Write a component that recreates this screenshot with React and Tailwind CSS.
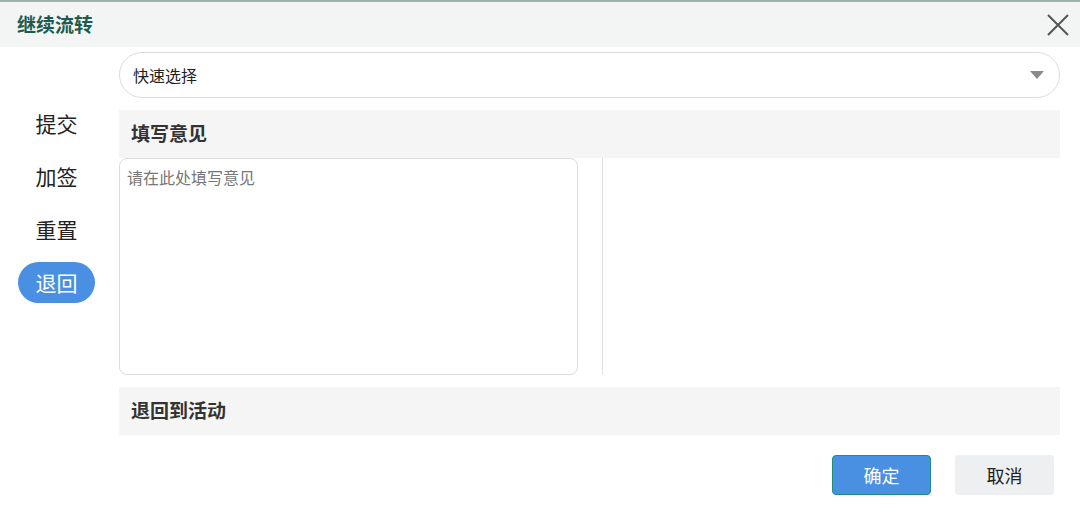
import React, { useState } from 'react';

const menu = ['提交', '加签', '重置', '退回'];

const serif = { fontFamily: '"Liberation Serif", "Noto Sans CJK SC", serif' };

const App = () => {
  const [active, setActive] = useState('退回');

  return (
    <div
      className="w-[1080px] h-[514px] bg-white border-t-2 border-[#9db3ab] overflow-hidden"
      style={{ fontFamily: '"Noto Sans CJK SC", "Noto Sans", sans-serif' }}
    >
      {/* Header */}
      <div className="h-[45px] bg-[#f3f5f5] flex items-center justify-between pl-[17px] pr-[8px]">
        <span className="text-[19px] font-bold text-[#1d5c4c] pt-[4px]" style={serif}>继续流转</span>
        <button className="w-[28px] h-[28px] flex items-center justify-center text-[#555]">
          <svg width="22" height="22" viewBox="0 0 22 22" fill="none" stroke="currentColor" strokeWidth="2">
            <path d="M1 1L21 21M21 1L1 21" />
          </svg>
        </button>
      </div>

      <div className="flex">
        {/* Side menu */}
        <div className="w-[119px] pt-[56px] pl-[18px] flex flex-col gap-[12px]">
          {menu.map((m) => (
            <button
              key={m}
              onClick={() => setActive(m)}
              className={`w-[77px] h-[41px] rounded-full text-[21px] leading-none flex items-center justify-center ${
                active === m ? 'bg-[#4a90e2] text-white' : 'text-[#222]'
              }`}
            >
              {m}
            </button>
          ))}
        </div>

        {/* Main */}
        <div className="w-[941px] pt-[5px]">
          <div className="h-[46px] rounded-full border border-[#dcdcdc] flex items-center justify-between pl-[13px] pr-[15px]">
            <span className="text-[16px] text-[#222]">快速选择</span>
            <svg width="14" height="8" viewBox="0 0 14 8">
              <path d="M0 0H14L7 8Z" fill="#8a8a8a" />
            </svg>
          </div>

          <div className="mt-[12px] h-[48px] bg-[#f5f5f5] flex items-center pl-[12px] pt-[2px]">
            <span className="text-[19px] font-bold text-[#333]" style={serif}>填写意见</span>
          </div>

          <div className="flex h-[217px]">
            <textarea
              placeholder="请在此处填写意见"
              className="w-[459px] h-full border border-[#dcdcdc] rounded-[8px] px-[7px] py-[6px] text-[16px] text-[#333] placeholder:text-[#777] resize-none outline-none"
            />
            <div className="ml-[24px] border-l border-[#e0e0e0] flex-1" />
          </div>

          <div className="mt-[12px] h-[48px] bg-[#f5f5f5] flex items-center pl-[12px] pt-[2px]">
            <span className="text-[19px] font-bold text-[#333]" style={serif}>退回到活动</span>
          </div>

          <div className="mt-[20px] flex justify-end gap-[24px] pr-[6px]">
            <button className="w-[99px] h-[40px] rounded-[4px] bg-[#4a90e2] border border-[#1b8f7c] text-white text-[18px]">
              确定
            </button>
            <button className="w-[99px] h-[40px] rounded-[4px] bg-[#eeeff1] text-[#222] text-[18px]">
              取消
            </button>
          </div>
        </div>
      </div>
    </div>
  );
};

export default App;
